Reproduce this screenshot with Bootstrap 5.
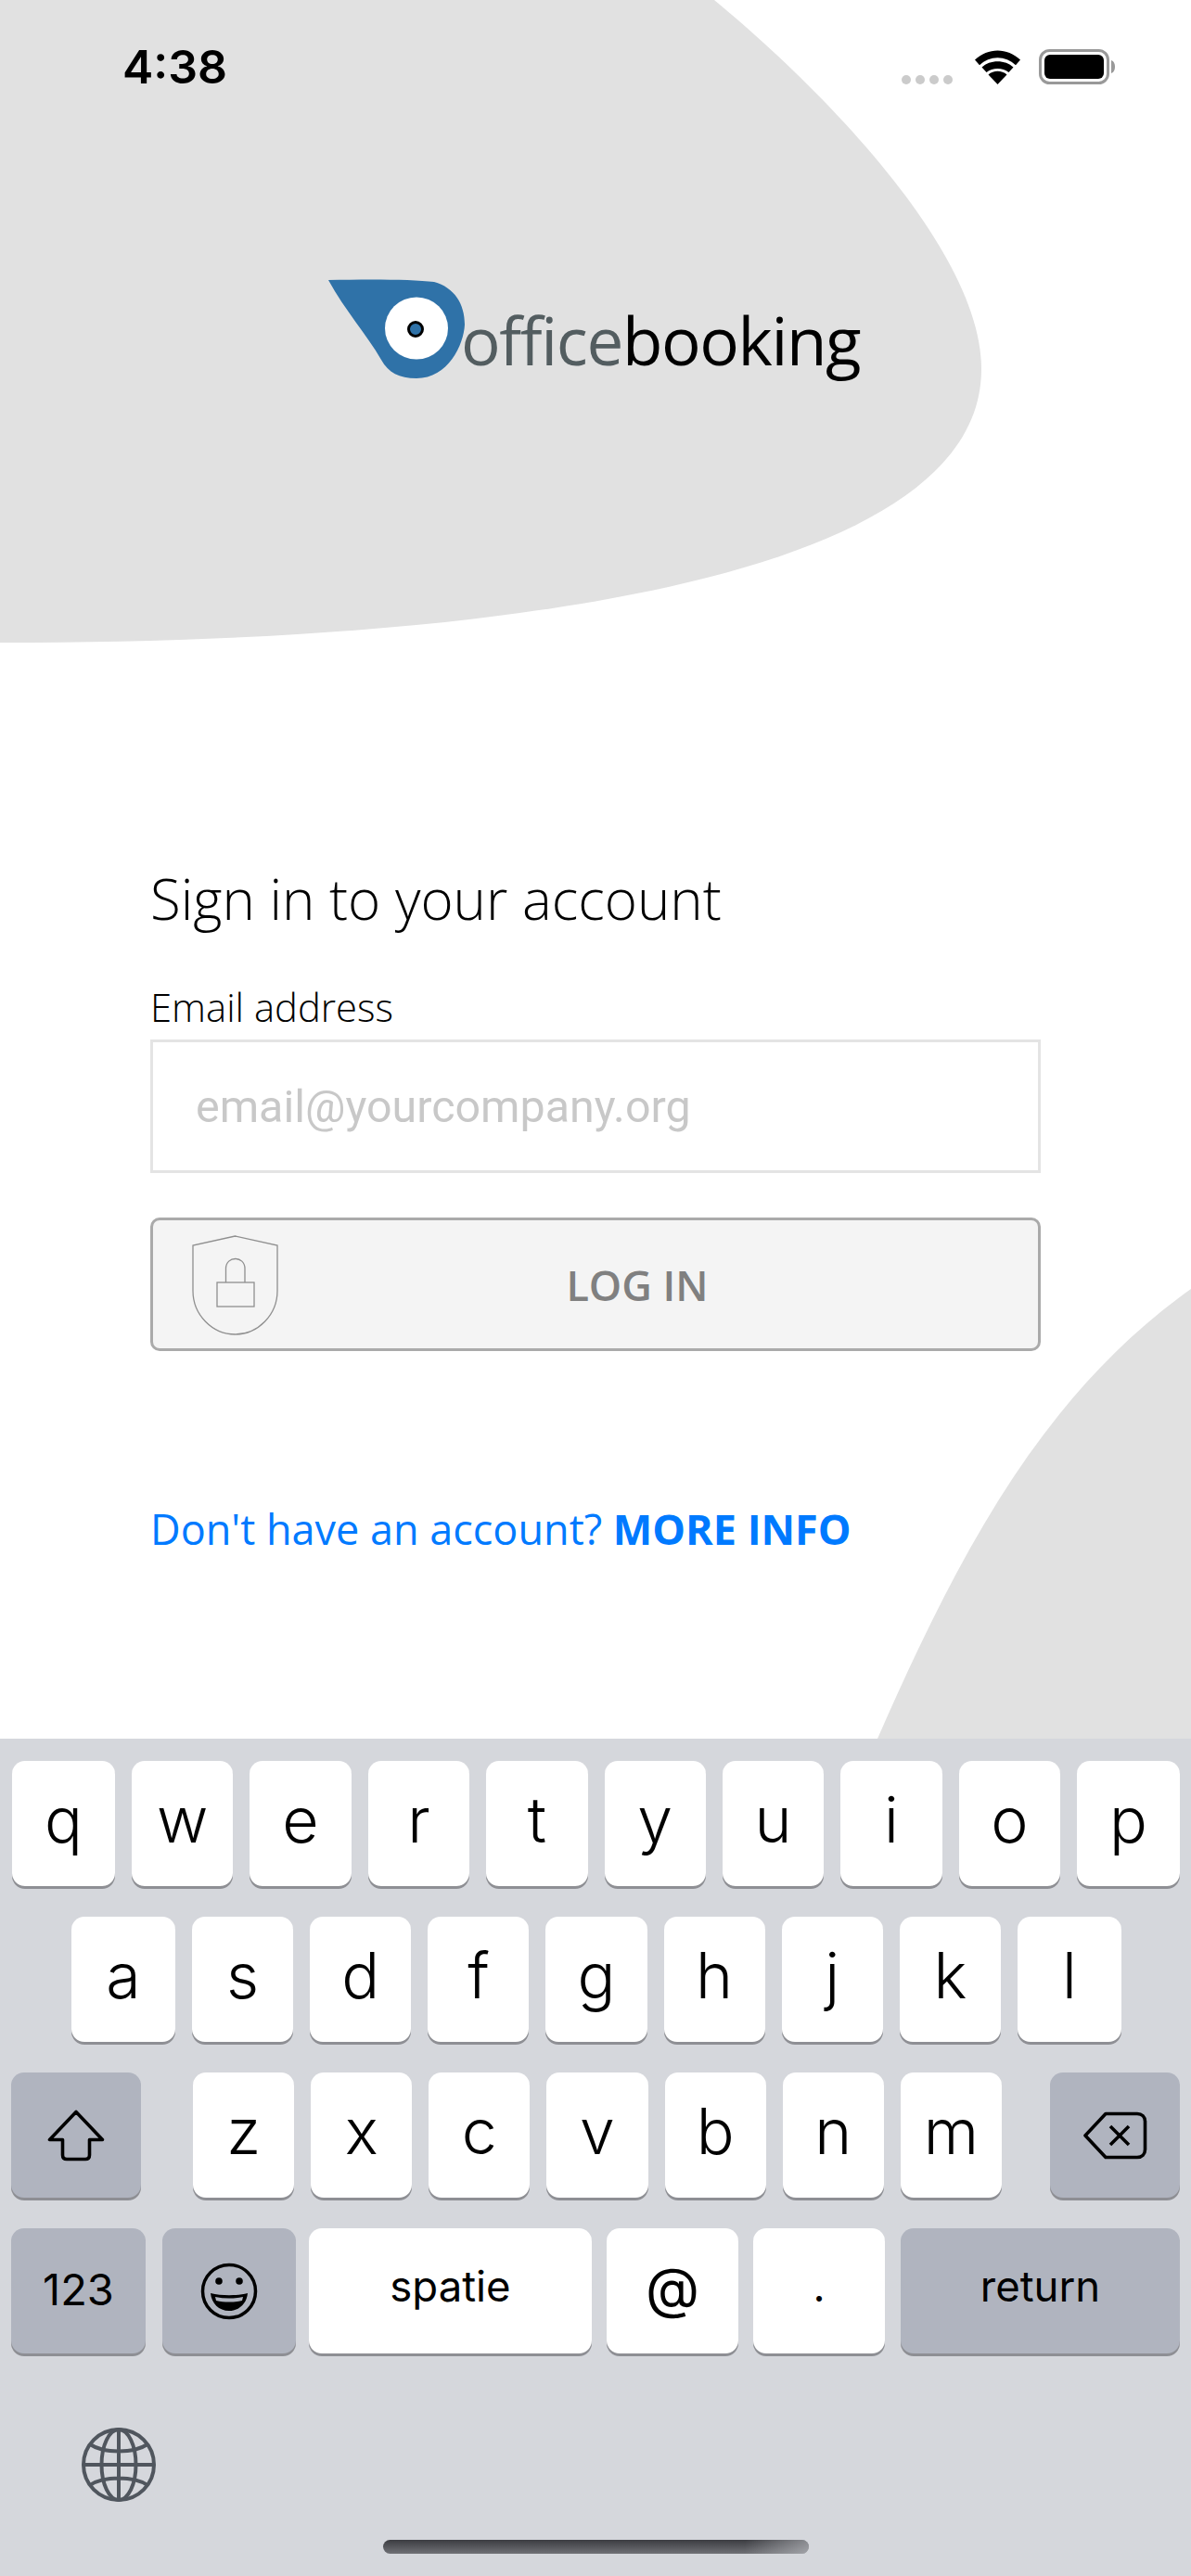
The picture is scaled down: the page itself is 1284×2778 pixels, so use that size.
<!DOCTYPE html>
<html lang="en">
<head>
<meta charset="utf-8">
<title>officebooking</title>
<link href="https://cdn.jsdelivr.net/npm/bootstrap@5.3.0/dist/css/bootstrap.min.css" rel="stylesheet">
<style>
html,body{margin:0;background:#fff}
.phone{position:relative;width:1284px;height:2778px;overflow:hidden;background:#fff;font-family:"Open Sans",sans-serif}
.blobs{position:absolute;left:0;top:0;width:1284px;height:2778px;z-index:0}
.layer{position:relative;z-index:1}
.statusbar{height:301px;padding:47px 82px 0 132px}
.clock{font-family:Inter,sans-serif;font-weight:600;font-size:50px;line-height:50px;letter-spacing:0;color:#000}
.status-icons{position:relative;width:230px;height:40px;margin-top:6px}
.sig-dots{display:flex;gap:5px;margin-top:28px}
.sig-dots i{display:block;width:10px;height:10px;border-radius:50%;background:#cbcbcb}
.brand{height:108px;padding-left:354px}
.brand-word{font-size:71px;line-height:108px;letter-spacing:-1.4px;margin-left:-7px;margin-top:12px;color:#000;font-weight:400}
.brand-word span{color:#535d60}
.signin{padding:520px 162px 0 162px}
.signin h1{font-weight:300;font-size:60px;line-height:80px;margin:0;color:#000}
.signin label{font-weight:300;font-size:41.800px;line-height:54px;margin:50px 0 8px 0;color:#000;display:block}
.mail{height:144px;border:3px solid #e4e4e4;border-radius:0;padding:0 46px;font-size:48.400px;font-family:Roboto,sans-serif;box-shadow:none}
.mail::placeholder{color:#c8c8c8;opacity:1}
.login{position:relative;height:144px;width:100%;margin-top:48px;border:3px solid #aaa;border-radius:10px;background:#f4f4f4;color:#808080;font-weight:600;font-size:45px;line-height:1;padding:0 0 0 90px}
.shield{position:absolute;left:42px;top:16px}
.more{display:block;margin:161px 0 0 0;font-size:45px;line-height:62px;color:#007aff;text-decoration:none;font-weight:400}
.more b{font-weight:700}
.keyboard{position:absolute;left:0;right:0;top:1875px;height:903px;background:#d5d7dc;padding-top:24px;z-index:2;font-family:Inter,sans-serif}
.krow{display:flex;gap:18px;height:135px;margin-bottom:33px;padding:0 12px 0 13px}
.krow.second{padding:0 75px 0 77px}
.krow.third{padding:0 12px}
.krow.bottom{gap:0;padding:0 12px}
.ky{flex:1 1 0;height:135px;background:#fff;border-radius:14px;box-shadow:0 3px 0 #8e8f94;display:flex;align-items:center;justify-content:center;font-size:68px;font-weight:300;color:#000;padding-bottom:9px;line-height:1}
.ky.edge{flex:0 0 111px}
.krow.second .ky.edge{flex-basis:112px}
.ky.dark{background:#b0b4bf}
.ky.word{font-size:45.500px;font-weight:400;padding-bottom:10px}
.w-shift{flex:0 0 140px!important;margin-right:38px}
.w-back{flex:0 0 140px!important;margin-left:34px}
.ky.w-123{flex:0 0 145px;margin-right:18px;font-size:47px;padding-bottom:4px}
.w-emoji{flex:0 0 144px;margin-right:14px}
.w-space{flex:0 0 305px;margin-right:16px}
.ky.w-at{flex:0 0 142px;margin-right:16px;font-size:60px;padding-bottom:8px}
.w-dot{flex:0 0 142px;margin-right:17px}
.w-ret{flex:0 0 301px}
.globe{position:absolute;left:88px;top:743px}
.homebar{position:absolute;left:413px;top:864px;width:459px;height:15px;border-radius:8px;background:linear-gradient(180deg,#3b3c41,#707176)}
.homefade{position:absolute;inset:0;border-radius:8px;background:linear-gradient(90deg,rgba(213,215,220,0) 85%,rgba(213,215,220,.5) 100%)}
</style>
</head>
<body>
<div class="phone">
  <svg class="blobs" viewBox="0 0 1284 2778" aria-hidden="true">
    <path fill="#e1e1e1" d="M0 0H770C885 95 1058 270 1058 398C1058 620 560 693 0 693Z"/>
    <path fill="#e1e1e1" d="M1284 1390C1130 1500 1040 1660 946 1875H1284Z"/>
  </svg>

  <div class="layer statusbar d-flex justify-content-between align-items-start">
    <div class="clock">4:38</div>
    <div class="status-icons d-flex align-items-start">
      <div class="sig-dots"><i></i><i></i><i></i><i></i></div>
      <svg class="ms-auto" width="151" height="40" viewBox="1051 53 151 40">
        <path d="M1075.5 91L1065.5 80.5C1071 75.5 1080 75.5 1085.5 80.5Z" fill="#000"/>
        <path d="M1058.500 72.500C1067 64 1084 64 1092.500 72.500L1087.500 78C1081 72.500 1070 72.500 1063.500 78Z" fill="#000"/>
        <path d="M1051 64.500C1065 51 1086 51 1100 64.500L1095 70.200C1084 59.500 1067 59.500 1056 70.200Z" fill="#000"/>
        <rect x="1121.500" y="54.500" width="73" height="35" rx="10" fill="none" stroke="#999" stroke-width="3"/>
        <rect x="1126" y="59" width="64" height="26" rx="6" fill="#000"/>
        <path d="M1198 65C1201 66 1202 69 1202 72C1202 75 1201 78 1198 79Z" fill="#999"/>
      </svg>
    </div>
  </div>

  <div class="layer brand d-flex align-items-start">
    <svg width="150" height="108" viewBox="354 301 150 108" class="flex-shrink-0" role="img" aria-label="logo">
      <path d="M354 302C395 301 445 301 468 304C490 310 501 328 501 350C500 372 483 408 449 408C430 408 419 402 411 388C395 360 372 335 354 302Z" fill="#2f72a8"/>
      <ellipse cx="449" cy="354" rx="34" ry="33.500" fill="#fff"/>
      <circle cx="448" cy="355" r="7.500" fill="#2f72a8" stroke="#000" stroke-width="3"/>
    </svg>
    <div class="brand-word"><span>office</span>booking</div>
  </div>

  <form class="layer signin" onsubmit="return false">
    <h1>Sign in to your account</h1>
    <label for="mail">Email address</label>
    <input id="mail" type="email" class="form-control mail" placeholder="email@yourcompany.org">
    <button type="button" class="btn login">
      <svg class="shield" width="93" height="108" viewBox="0 0 93 108" aria-hidden="true">
        <path d="M46.500 1L92 11V60C92 86 71 107 46.500 107C22 107 1 86 1 60V11Z" fill="none" stroke="#8f8f8f" stroke-width="1.300"/>
        <rect x="27" y="51" width="40" height="26" fill="none" stroke="#8f8f8f" stroke-width="1.300"/>
        <path d="M36.500 51V36C36.500 22 57 22 57 36V51" fill="none" stroke="#8f8f8f" stroke-width="1.300"/>
      </svg>
      LOG IN
    </button>
    <a class="more" href="#">Don't have an account? <b>MORE INFO</b></a>
  </form>

  <div class="keyboard">
    <div class="krow">
      <div class="ky edge">q</div><div class="ky">w</div><div class="ky">e</div><div class="ky">r</div><div class="ky">t</div><div class="ky">y</div><div class="ky">u</div><div class="ky">i</div><div class="ky">o</div><div class="ky edge">p</div>
    </div>
    <div class="krow second">
      <div class="ky edge">a</div><div class="ky">s</div><div class="ky">d</div><div class="ky">f</div><div class="ky">g</div><div class="ky">h</div><div class="ky">j</div><div class="ky">k</div><div class="ky edge">l</div>
    </div>
    <div class="krow third">
      <div class="ky dark w-shift p-0">
        <svg width="62" height="56" viewBox="0 0 62 56" aria-hidden="true"><path d="M31 2.500L2.500 32.500H16.500V49C16.500 52 18 53.500 21 53.500H41C44 53.500 45.500 52 45.500 49V32.500H59.500Z" fill="none" stroke="#000" stroke-width="3.600" stroke-linejoin="round"/></svg>
      </div>
      <div class="ky">z</div><div class="ky">x</div><div class="ky">c</div><div class="ky">v</div><div class="ky">b</div><div class="ky">n</div><div class="ky">m</div>
      <div class="ky dark w-back p-0">
        <svg width="70" height="52" viewBox="0 0 70 52" aria-hidden="true"><path d="M25 2.500H59C64 2.500 67.500 6 67.500 11V41C67.500 46 64 49.500 59 49.500H25L3 26Z" fill="none" stroke="#000" stroke-width="3.600" stroke-linejoin="round"/><path d="M30 16L50 36M50 16L30 36" fill="none" stroke="#000" stroke-width="3.600"/></svg>
      </div>
    </div>
    <div class="krow bottom">
      <div class="ky dark word w-123">123</div>
      <div class="ky dark w-emoji p-0">
        <svg width="62" height="62" viewBox="0 0 62 62" aria-hidden="true"><circle cx="31" cy="31" r="28.500" fill="none" stroke="#000" stroke-width="3.500"/><circle cx="20" cy="20" r="3.800" fill="#000"/><circle cx="42" cy="20" r="3.800" fill="#000"/><path d="M11 33C23 36 39 36 51 33C50 44 42 52 31 52C20 52 12 44 11 33Z" fill="#000"/><path d="M16 37C26 39 36 39 46 37L45 41C36 43 26 43 17 41Z" fill="#b0b4bf"/></svg>
      </div>
      <div class="ky word w-space">spatie</div>
      <div class="ky word w-at">@</div>
      <div class="ky word w-dot">.</div>
      <div class="ky dark word w-ret">return</div>
    </div>
    <svg class="globe" width="80" height="80" viewBox="0 0 80 80" aria-hidden="true">
      <g fill="none" stroke="#50565e" stroke-width="4">
        <circle cx="40" cy="40" r="38"/><ellipse cx="40" cy="40" rx="18.500" ry="38"/>
        <path d="M40 2V78M2 40H78M9 18C24 28 56 28 71 18M9 62C24 52 56 52 71 62"/>
      </g>
    </svg>
    <div class="homebar"><div class="homefade"></div></div>
  </div>
</div>
<script src="https://cdn.jsdelivr.net/npm/bootstrap@5.3.0/dist/js/bootstrap.bundle.min.js"></script>
</body>
</html>
